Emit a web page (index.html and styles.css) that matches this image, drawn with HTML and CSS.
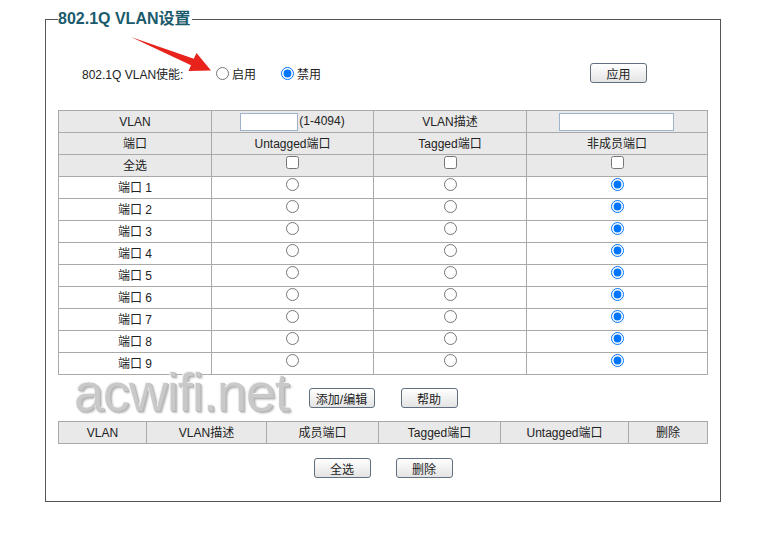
FILE: index.html
```html
<!DOCTYPE html>
<html lang="zh-CN">

<head>
    <meta charset="UTF-8">
    <title>802.1Q VLAN设置</title>
    <link rel="stylesheet" href="styles.css">
</head>

<body>
    <div class="page">
        <fieldset class="panel">
            <legend>802.1Q VLAN设置</legend>

            <div class="enable-row">
                <span class="enable-label">802.1Q VLAN使能:</span>
                <label class="opt"><input type="radio" name="enable">启用</label>
                <label class="opt"><input type="radio" name="enable" checked>禁用</label>
                <button class="btn apply">应用</button>
            </div>

            <table class="grid ports">
                <colgroup>
                    <col style="width:153px">
                    <col style="width:162px">
                    <col style="width:153px">
                    <col>
                </colgroup>
                <tr class="head">
                    <td>VLAN</td>
                    <td><input type="text" class="field vid">(1-4094)</td>
                    <td>VLAN描述</td>
                    <td><input type="text" class="field desc"></td>
                </tr>
                <tr class="head">
                    <td>端口</td>
                    <td>Untagged端口</td>
                    <td>Tagged端口</td>
                    <td>非成员端口</td>
                </tr>
                <tr class="head">
                    <td>全选</td>
                    <td><input type="checkbox"></td>
                    <td><input type="checkbox"></td>
                    <td><input type="checkbox"></td>
                </tr>
                <tr><td>端口 1</td><td><input type="radio" name="p1"></td><td><input type="radio" name="p1"></td><td><input type="radio" name="p1" checked></td></tr>
                <tr><td>端口 2</td><td><input type="radio" name="p2"></td><td><input type="radio" name="p2"></td><td><input type="radio" name="p2" checked></td></tr>
                <tr><td>端口 3</td><td><input type="radio" name="p3"></td><td><input type="radio" name="p3"></td><td><input type="radio" name="p3" checked></td></tr>
                <tr><td>端口 4</td><td><input type="radio" name="p4"></td><td><input type="radio" name="p4"></td><td><input type="radio" name="p4" checked></td></tr>
                <tr><td>端口 5</td><td><input type="radio" name="p5"></td><td><input type="radio" name="p5"></td><td><input type="radio" name="p5" checked></td></tr>
                <tr><td>端口 6</td><td><input type="radio" name="p6"></td><td><input type="radio" name="p6"></td><td><input type="radio" name="p6" checked></td></tr>
                <tr><td>端口 7</td><td><input type="radio" name="p7"></td><td><input type="radio" name="p7"></td><td><input type="radio" name="p7" checked></td></tr>
                <tr><td>端口 8</td><td><input type="radio" name="p8"></td><td><input type="radio" name="p8"></td><td><input type="radio" name="p8" checked></td></tr>
                <tr><td>端口 9</td><td><input type="radio" name="p9"></td><td><input type="radio" name="p9"></td><td><input type="radio" name="p9" checked></td></tr>
            </table>

            <div class="btn-row first">
                <button class="btn edit">添加/编辑</button>
                <button class="btn">帮助</button>
            </div>

            <table class="grid list">
                <colgroup>
                    <col style="width:88px">
                    <col style="width:120px">
                    <col style="width:112px">
                    <col style="width:122px">
                    <col style="width:128px">
                    <col>
                </colgroup>
                <tr class="head">
                    <td>VLAN</td>
                    <td>VLAN描述</td>
                    <td>成员端口</td>
                    <td>Tagged端口</td>
                    <td>Untagged端口</td>
                    <td>删除</td>
                </tr>
            </table>

            <div class="btn-row second">
                <button class="btn">全选</button>
                <button class="btn">删除</button>
            </div>
        </fieldset>

        <!-- watermark + annotation arrow sit over the panel -->
        <div class="watermark">acwifi.net</div>
        <svg class="arrow" width="766" height="100" viewBox="0 0 766 100">
            <polygon points="131,37 193.8,58.8 196.5,53 211,70.5 188.5,71 191,65.3" fill="#e8231c" />
        </svg>
    </div>
</body>

</html>
```

FILE: styles.css
```css
/* Basic styling */
body {
    margin: 0;
    font-family: 'Liberation Sans', 'Noto Sans CJK SC', sans-serif;
    font-size: 12px;
    color: #222;
    background-color: #fff;
}

.page {
    position: relative;
    padding: 10px 0 0 45px;
}

.panel {
    box-sizing: border-box;
    width: 676px;
    margin: 0;
    padding: 0 11px 23px 12px;
    border: 1px solid #555;
    min-width: 0;
}

.panel legend {
    padding: 0 1px 0 0;
    font-size: 16px;
    font-weight: bold;
    color: #1b5b6c;
    line-height: 18px;
}

.enable-row {
    display: flex;
    align-items: center;
    height: 22px;
    margin-top: 34px;
    padding-left: 24px;
}

.enable-label {
    width: 134px;
}

.opt {
    display: flex;
    align-items: center;
    margin-right: 25px;
}

.opt input {
    margin: 0 3px 0 0;
    width: 13px;
    height: 13px;
}

.apply {
    margin-left: auto;
    margin-right: 62px;
}

.grid {
    width: 650px;
    border-collapse: collapse;
    table-layout: fixed;
}

.grid td {
    height: 21px;
    padding: 0;
    border: 1px solid #a9a9a9;
    text-align: center;
    vertical-align: middle;
    line-height: 14px;
}

.ports {
    margin-top: 26px;
}

.head td {
    background-color: #e9e9e9;
}

.grid input[type="radio"],
.grid input[type="checkbox"] {
    width: 13px;
    height: 13px;
    margin: 0 0 6px;
    vertical-align: middle;
}

.field {
    box-sizing: border-box;
    height: 18px;
    margin: 0;
    padding: 0 2px;
    border: 1px solid #9fb4cc;
    background: #fff;
    vertical-align: middle;
}

.vid {
    width: 58px;
    margin-right: 1px;
}

.desc {
    width: 115px;
    margin-left: -2px;
}

.btn-row {
    display: flex;
    justify-content: center;
    gap: 26px;
    width: 650px;
}

.btn-row.first {
    margin: 13px 0 13px;
}

.btn-row.second {
    margin-top: 14px;
    gap: 25px;
}

.btn {
    box-sizing: border-box;
    width: 57px;
    height: 20px;
    padding: 0;
    font-family: inherit;
    font-size: 12px;
    color: #222;
    border: 1px solid #5f6f80;
    border-radius: 3px;
    background: linear-gradient(#ffffff, #e4e4e4);
}

.btn.edit {
    width: 66px;
}

.watermark {
    position: absolute;
    left: 74px;
    top: 372px;
    font-family: 'Liberation Sans', sans-serif;
    font-size: 54px;
    line-height: 40px;
    letter-spacing: -1px;
    color: #c9c9c9;
    text-shadow: -1px -1px 0 #f4f4f4, 1px 1px 0 #b4b4b4, 2px 2px 2px #c0c0c0;
}

.arrow {
    position: absolute;
    left: 0;
    top: 0;
}
```
